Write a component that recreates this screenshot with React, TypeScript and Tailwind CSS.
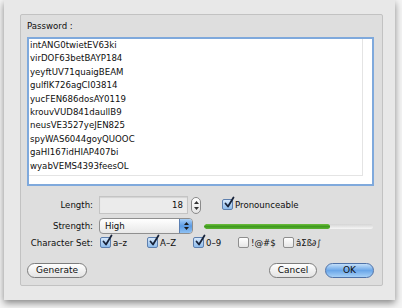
import React from 'react';

const passwords = [
  'intANG0twietEV63ki',
  'virDOF63betBAYP184',
  'yeyftUV71quaigBEAM',
  'gulfIK726agCI03814',
  'yucFEN686dosAY0119',
  'krouvVUD841daullB9',
  'neusVE3527yeJEN825',
  'spyWAS6044goyQUOOC',
  'gaHI167idHIAP407bi',
  'wyabVEMS4393feesOL',
];

const charSets = [
  { label: 'a–z', checked: true, width: 'w-[47px]' },
  { label: 'A–Z', checked: true, width: 'w-[46px]' },
  { label: '0–9', checked: true, width: 'w-[45px]' },
  { label: '!@#$', checked: false, width: 'w-[45px]' },
  { label: 'âΣß∂∫', checked: false, width: 'w-[45px]' },
];

function CheckBox({ checked }: { checked: boolean }) {
  return (
    <span
      className={`relative shrink-0 w-[11px] h-[11px] rounded-[2px] border ${
        checked
          ? 'border-[#5d7fae] bg-gradient-to-b from-[#d6e8fb] to-[#8ebcec]'
          : 'border-[#8e8e8e] bg-gradient-to-b from-white to-[#e6e6e6]'
      }`}
    >
      {checked && (
        <svg className="absolute left-[1px] top-[-3px] overflow-visible" width="11" height="12" viewBox="0 0 11 12">
          <path d="M1.5 6.5 L4 9.5 L9.5 0.5" fill="none" stroke="#17233a" strokeWidth="1.8" strokeLinecap="round" strokeLinejoin="round" />
        </svg>
      )}
    </span>
  );
}

export default function App() {
  return (
    <div className="w-[402px] h-[308px] bg-[#f4f4f4] overflow-hidden font-['DejaVu_Sans',sans-serif] text-[8.6px] text-[#0e0e0e]">
      <div className="ml-[4px] w-[391px] h-[300px] bg-[#e8e8e8] shadow-[0_3px_7px_rgba(0,0,0,0.45)] pt-[14px] pl-[16px]">
        <div className="w-[363px] h-[272px] bg-[#dedede] border border-[#c2c2c2] rounded-[2px] flex flex-col">
          <div className="pl-[6px] pt-[5px] leading-[12px]">Password :</div>

          {/* password list */}
          <div className="ml-[6px] mt-[5px] w-[347px] h-[149px] border-2 border-[#7fa9dc] bg-white">
            <div className="w-[334px] h-[137px] border-r border-b border-[#e4e4e4] pl-[1px] leading-[13.4px]">
              {passwords.map(p => (
                <div key={p}>{p}</div>
              ))}
            </div>
          </div>

          {/* length */}
          <div className="mt-[10px] h-[18px] flex items-center pl-[6px]">
            <span className="w-[66px] text-right">Length:</span>
            <div className="ml-[6px] w-[89px] h-[18px] border border-[#c4c4c4] bg-[#ebebeb] shadow-[inset_0_1px_1px_rgba(0,0,0,0.1)] flex items-center justify-end pr-[4px]">
              18
            </div>
            <div className="ml-[3px] w-[10px] h-[17px] rounded-full border border-[#8a8a8a] bg-gradient-to-b from-white to-[#e4e4e4] flex flex-col items-center justify-center gap-[3px]">
              <svg width="5" height="3" viewBox="0 0 5 3"><path d="M0 3 L2.5 0 L5 3 Z" fill="#333" /></svg>
              <svg width="5" height="3" viewBox="0 0 5 3"><path d="M0 0 L2.5 3 L5 0 Z" fill="#333" /></svg>
            </div>
            <div className="ml-[21px] flex items-center gap-[2px]">
              <CheckBox checked />
              <span>Pronounceable</span>
            </div>
          </div>

          {/* strength */}
          <div className="mt-[4px] h-[16px] flex items-center pl-[6px]">
            <span className="w-[66px] text-right">Strength:</span>
            <div className="ml-[6px] w-[94px] h-[16px] rounded-[4px] border border-[#8f8f8f] bg-gradient-to-b from-white to-[#e8e8e8] flex items-center overflow-hidden">
              <span className="flex-1 pl-[5px]">High</span>
              <div className="w-[13px] h-full bg-gradient-to-b from-[#a9d0f7] via-[#5b9be3] to-[#8ec0f2] border-l border-[#5a7fb3] flex flex-col items-center justify-center gap-[2px]">
                <svg width="5" height="3" viewBox="0 0 5 3"><path d="M0 3 L2.5 0 L5 3 Z" fill="#1b1b1b" /></svg>
                <svg width="5" height="3" viewBox="0 0 5 3"><path d="M0 0 L2.5 3 L5 0 Z" fill="#1b1b1b" /></svg>
              </div>
            </div>
            <div className="ml-[11px] w-[169px] h-[5px] rounded-full bg-gradient-to-b from-[#d4d4d4] to-[#f6f6f6] overflow-hidden">
              <div className="w-[126px] h-full rounded-full bg-gradient-to-b from-[#6cbf3c] via-[#3f9a1f] to-[#5bb231]" />
            </div>
          </div>

          {/* character set */}
          <div className="mt-[2px] h-[14px] flex items-center pl-[6px]">
            <span className="w-[66px] text-right">Character Set:</span>
            <div className="ml-[7px] flex items-center">
              {charSets.map(c => (
                <div key={c.label} className={`${c.width} flex items-center gap-[2px]`}>
                  <CheckBox checked={c.checked} />
                  <span>{c.label}</span>
                </div>
              ))}
            </div>
          </div>

          {/* buttons */}
          <div className="mt-[13px] h-[15px] flex items-center pl-[6px] pr-[8px] text-[9px]">
            <button className="w-[60px] h-[15px] rounded-full border border-[#7d7d7d] bg-gradient-to-b from-white to-[#e3e3e3] leading-none">
              Generate
            </button>
            <div className="flex-1" />
            <button className="w-[48px] h-[15px] rounded-full border border-[#7d7d7d] bg-gradient-to-b from-white to-[#e3e3e3] leading-none">
              Cancel
            </button>
            <button className="ml-[8px] w-[49px] h-[15px] rounded-full border border-[#4f72a8] bg-gradient-to-b from-[#c3dff9] via-[#6aa6e8] to-[#a6d0f6] leading-none">
              OK
            </button>
          </div>
        </div>
      </div>
    </div>
  );
}
